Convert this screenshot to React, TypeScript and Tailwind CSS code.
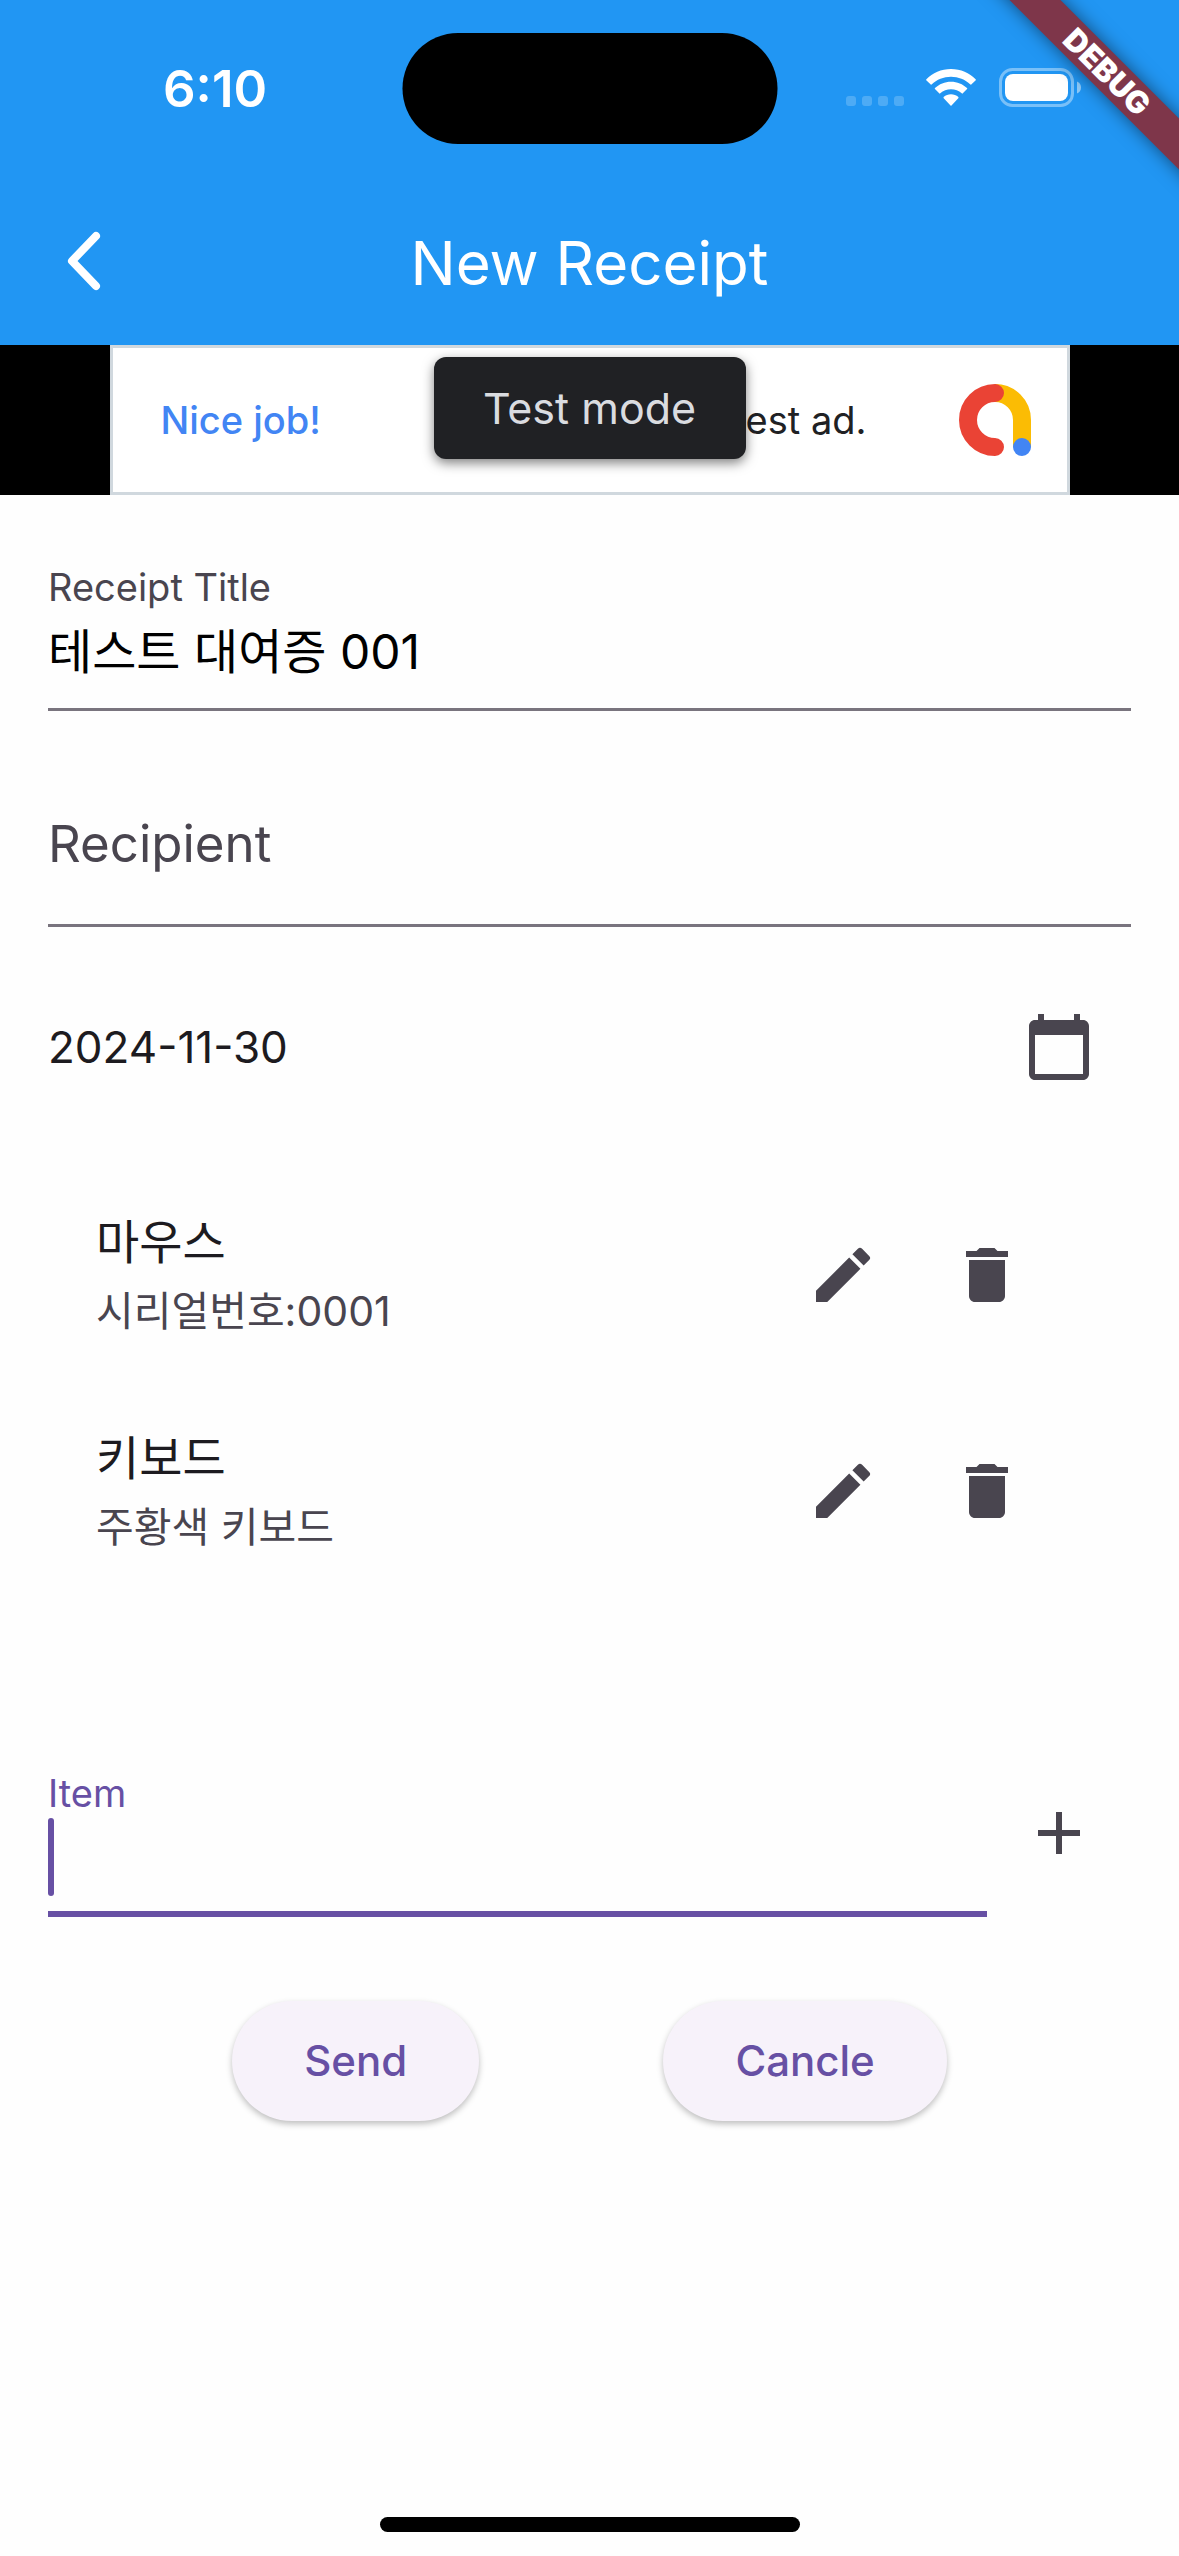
import { useState } from "react";
import { MdAdd, MdCalendarToday, MdDelete, MdEdit } from "react-icons/md";

type Item = { id: number; name: string; note: string };

const ITEMS: Item[] = [
  { id: 1, name: "마우스", note: "시리얼번호:0001" },
  { id: 2, name: "키보드", note: "주황색 키보드" },
];

function WifiIcon() {
  return (
    <svg viewBox="0 0 50 37" className="h-[37px] w-[50px]" fill="#fff" aria-hidden="true">
      <path d="M25 0C34.700 0 43.500 3.700 49.600 10.300L50 10.900 45 15.800 44.400 15.400C39.200 10.500 32.400 7.700 25 7.700S10.800 10.500 5.600 15.400L5 15.800 0 10.900.4 10.300C6.500 3.700 15.300 0 25 0Z" />
      <path d="M25 12.700C31.200 12.700 36.800 15.100 41 19.100L41.300 19.700 36.300 24.700 35.700 24.300C32.800 21.700 29.100 20.200 25 20.200S17.200 21.700 14.300 24.300L13.700 24.700 8.700 19.700 9 19.100C13.200 15.100 18.800 12.700 25 12.700Z" />
      <path d="M25 25.300C27.700 25.300 30.300 26.300 32.400 28L32.500 29 25.500 36.500C25.200 36.900 24.800 36.900 24.500 36.500L17.500 29 17.600 28C19.700 26.300 22.300 25.300 25 25.300Z" />
    </svg>
  );
}

function BatteryIcon() {
  return (
    <svg viewBox="0 0 82 39" className="h-[39px] w-[82px]" aria-hidden="true">
      <rect x="1.500" y="1.500" width="72" height="36" rx="12" fill="none" stroke="#fff" strokeOpacity="0.4" strokeWidth="3" />
      <rect x="6" y="6" width="63" height="27" rx="8" fill="#fff" />
      <path d="M78 13.500C80.500 14.500 82 16.800 82 19.500S80.500 24.500 78 25.500Z" fill="#fff" fillOpacity="0.5" />
    </svg>
  );
}

function AdMobLogo() {
  return (
    <svg viewBox="0 0 72 72" className="size-[72px]" fill="none" strokeWidth="18" aria-hidden="true">
      <path d="M36 9A27 27 0 0 1 63 36V63" stroke="#fbbc04" />
      <path d="M36 9A27 27 0 0 0 36 63" stroke="#ea4335" strokeLinecap="round" />
      <circle cx="63" cy="63" r="9" fill="#4285f4" />
    </svg>
  );
}

function StatusBar() {
  return (
    <div className="relative flex h-[177px] items-start justify-between pr-[98px] pl-[163px] text-white">
      <span className="pt-[57px] text-[51px] leading-[64px] font-semibold">6:10</span>
      <div className="absolute top-[33px] left-1/2 h-[111px] w-[375px] -translate-x-1/2 rounded-full bg-black" />
      <div className="flex items-end pt-[68px]">
        <div className="flex gap-[6px] pr-[22px] pb-[1px]">
          {[0, 1, 2, 3].map((i) => (
            <span key={i} className="size-[10px] rounded-[3px] bg-white/20" />
          ))}
        </div>
        <div className="flex items-center gap-[23px]">
          <WifiIcon />
          <BatteryIcon />
        </div>
      </div>
    </div>
  );
}

function DebugBanner() {
  return (
    <div className="pointer-events-none absolute top-0 right-0 size-[220px] overflow-hidden">
      <div className="absolute top-[54px] right-[-88px] flex h-9 w-80 rotate-45 items-center justify-center bg-[#7e364a] text-[31px] leading-9 font-black text-white shadow-[0_0_18px_rgba(0,0,0,0.5)]">
        DEBUG
      </div>
    </div>
  );
}

function AppBar() {
  return (
    <div className="grid h-[168px] grid-cols-[168px_1fr_168px] items-center">
      <button type="button" aria-label="Back" className="flex size-[168px] items-center justify-center">
        <svg viewBox="0 0 34 60" className="h-[60px] w-[34px]" fill="none" stroke="#fff" strokeWidth="8" strokeLinecap="round" strokeLinejoin="round" aria-hidden="true">
          <path d="M29 5L5 30L29 55" />
        </svg>
      </button>
      <h1 className="pt-1 text-center text-[60px] leading-[84px] text-white">New Receipt</h1>
    </div>
  );
}

function AdBanner() {
  return (
    <div className="flex h-[150px] justify-center bg-black">
      <div className="relative flex w-[960px] items-center justify-between border-[3px] border-[#d0d8de] bg-white pr-[36px] pl-[48px]">
        <span className="text-[38px] leading-[48px] font-medium text-[#4285f4]">Nice job!</span>
        <div className="flex items-center gap-[92px]">
          <span className="text-[38px] leading-[48px] text-[#202124]">test ad.</span>
          <AdMobLogo />
        </div>
        <div className="absolute top-[9px] left-1/2 flex h-[102px] w-[312px] -translate-x-1/2 items-center justify-center rounded-xl bg-[#202124] text-[43px] leading-[56px] text-[#dadce0] shadow-[0_4px_12px_rgba(0,0,0,0.5)]">
          Test mode
        </div>
      </div>
    </div>
  );
}

function ItemRow({ item, onDelete }: { item: Item; onDelete: () => void }) {
  return (
    <li className="flex h-[216px] items-center justify-between pr-[72px] pl-12">
      <div>
        <p className="text-[47px] leading-[72px] text-[#1d1b20]">{item.name}</p>
        <p className="text-[41px] leading-[66px] text-[#49454f]">{item.note}</p>
      </div>
      <div className="flex text-[#49454f]">
        <button type="button" aria-label="Edit" className="flex size-36 items-center justify-center">
          <MdEdit className="size-[72px]" />
        </button>
        <button type="button" aria-label="Delete" onClick={onDelete} className="flex size-36 items-center justify-center">
          <MdDelete className="size-[72px]" />
        </button>
      </div>
    </li>
  );
}

export default function App() {
  const [title, setTitle] = useState("테스트 대여증 001");
  const [recipient, setRecipient] = useState("");
  const [draft, setDraft] = useState("");
  const [items, setItems] = useState(ITEMS);

  return (
    <div className="relative flex min-h-screen flex-col bg-[#fefefe] font-['Inter','Noto_Sans_CJK_KR',sans-serif]">
      <header className="bg-[#2196f3]">
        <StatusBar />
        <AppBar />
      </header>
      <DebugBanner />
      <AdBanner />

      <main className="flex flex-1 flex-col p-12">
        <div className="flex flex-col gap-[5px] border-b-[3px] border-[#79747e] py-5">
          <label htmlFor="title" className="text-[38px] leading-[48px] text-[#49454f]">
            Receipt Title
          </label>
          <input
            id="title"
            value={title}
            onChange={(e) => setTitle(e.target.value)}
            className="h-[72px] w-full bg-transparent text-[48px] leading-[72px] text-black outline-none"
          />
        </div>

        <div className="mt-12 grid h-[168px] border-b-[3px] border-[#79747e]">
          <label htmlFor="recipient" className="col-start-1 row-start-1 self-center pt-1 text-[51px] leading-[72px] text-[#49454f]">
            {recipient ? "" : "Recipient"}
          </label>
          <input
            id="recipient"
            value={recipient}
            onChange={(e) => setRecipient(e.target.value)}
            className="col-start-1 row-start-1 w-full bg-transparent text-[48px] text-black outline-none"
          />
        </div>

        <div className="mt-12 flex items-center justify-between">
          <span className="text-[44px] leading-[60px] text-[#1d1b20]">2024-11-30</span>
          <button type="button" aria-label="Pick date" className="flex size-36 items-center justify-center text-[#49454f]">
            <MdCalendarToday className="size-[72px]" />
          </button>
        </div>

        <ul className="mt-12">
          {items.map((item) => (
            <ItemRow key={item.id} item={item} onDelete={() => setItems(items.filter((i) => i.id !== item.id))} />
          ))}
        </ul>

        <div className="mt-[150px] flex items-center">
          <div className="flex flex-1 flex-col gap-[5px] border-b-[6px] border-[#6750a4] pt-5 pb-[17px]">
            <label htmlFor="item" className="text-[38px] leading-[48px] text-[#6750a4]">
              Item
            </label>
            <div className="relative h-[72px]">
              <input
                id="item"
                value={draft}
                onChange={(e) => setDraft(e.target.value)}
                className="h-full w-full bg-transparent text-[48px] text-black caret-[#6750a4] outline-none"
              />
              {draft === "" && <span className="absolute -top-1 left-0 h-[78px] w-[6px] rounded-full bg-[#6750a4]" />}
            </div>
          </div>
          <button type="button" aria-label="Add item" className="flex size-36 items-center justify-center text-[#49454f]">
            <MdAdd className="size-[72px]" />
          </button>
        </div>

        <div className="mt-[84px] flex justify-evenly">
          {["Send", "Cancle"].map((text) => (
            <button
              key={text}
              type="button"
              className="h-[120px] rounded-full bg-[#f7f2fa] px-[72px] text-[42px] leading-[60px] font-medium text-[#6750a4] shadow-[0_3px_6px_rgba(0,0,0,0.25)]"
            >
              {text}
            </button>
          ))}
        </div>
      </main>

      <div className="flex justify-center pb-6">
        <div className="h-[15px] w-[420px] rounded-full bg-black" />
      </div>
    </div>
  );
}
